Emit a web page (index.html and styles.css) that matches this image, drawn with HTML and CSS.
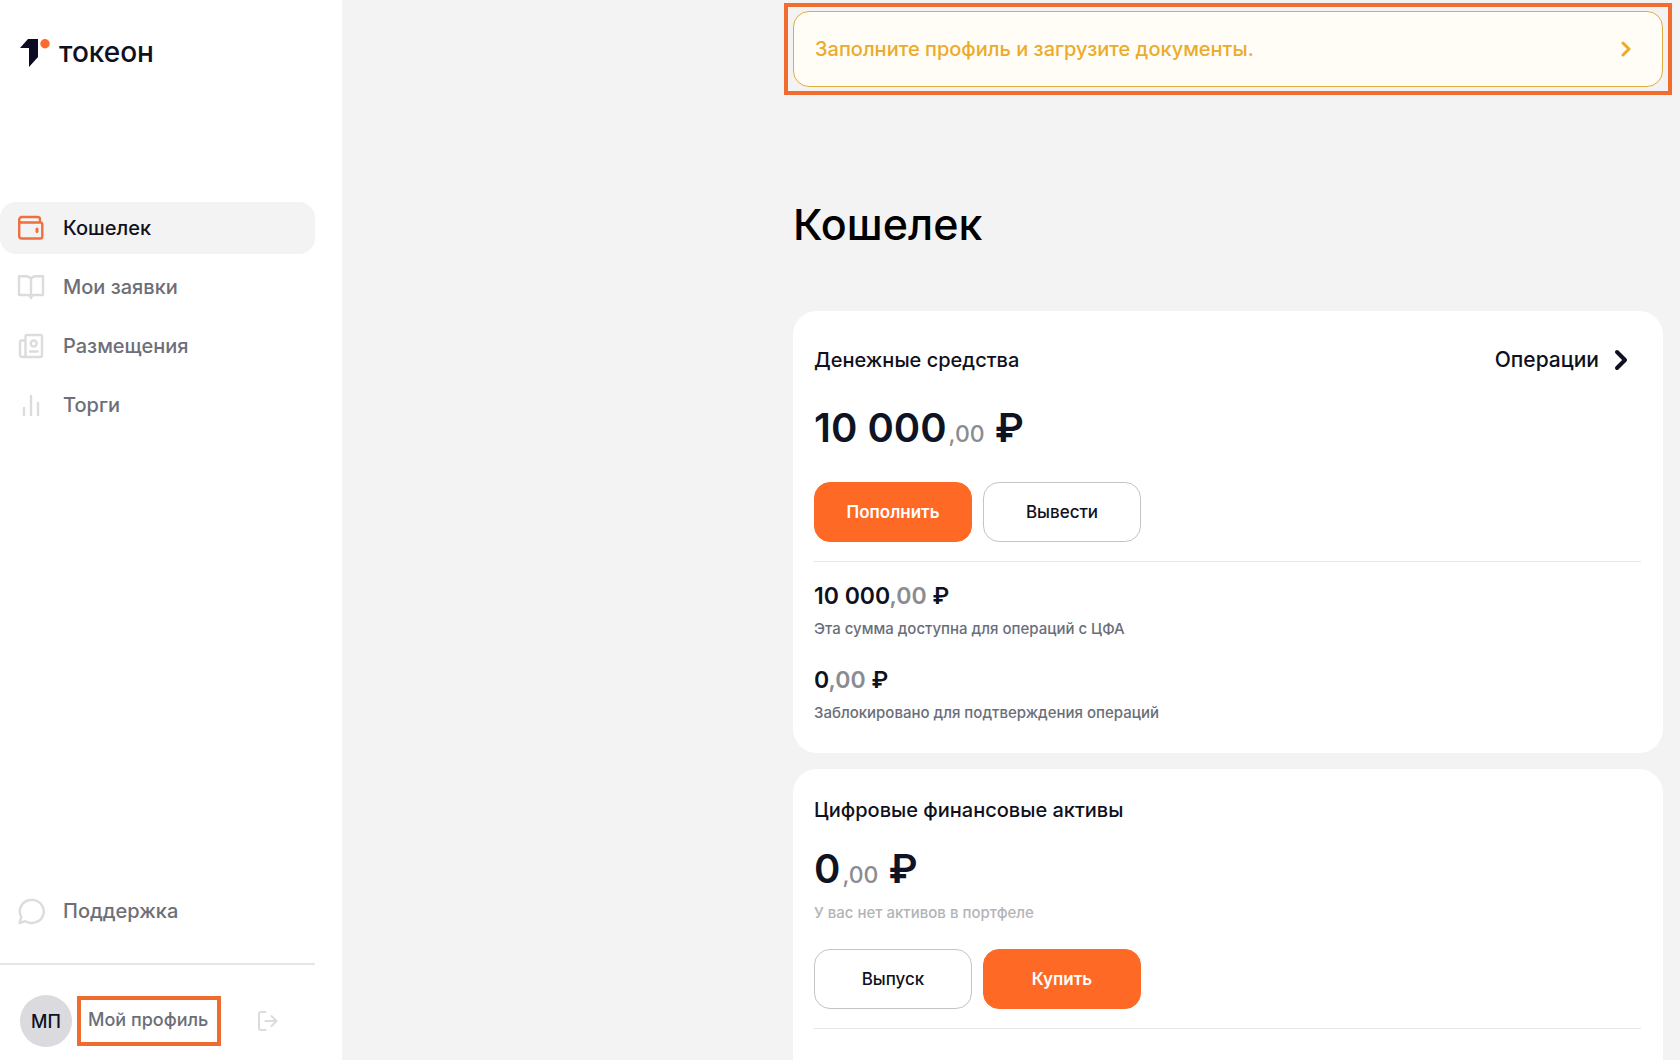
FILE: index.html
```
<!DOCTYPE html>
<html lang="ru">
<head>
  <meta charset="UTF-8" />
  <meta name="viewport" content="width=device-width, initial-scale=1.0" />
  <title>Токеон</title>
  <link rel="stylesheet" href="styles.css">
</head>
<body>
  <div class="app">
    <aside class="sidebar">
      <a class="logo" href="#">
        <svg width="30" height="28" viewBox="0 0 30 28">
          <path d="M0 9 L8 0 H18 V18 L9 28 V9 Z" fill="#0d0a24" />
          <circle cx="25" cy="4.7" r="4.7" fill="#fd6a2c" />
        </svg>
        <span>токеон</span>
      </a>

      <nav class="menu">
        <a class="menu-item active" href="#">
          <svg class="icon" viewBox="0 0 28 28">
            <path d="M2.2 6.5 V22 A2.5 2.5 0 0 0 4.7 24.5 H23.3 A2 2 0 0 0 25.3 22.5 V10.5 A2 2 0 0 0 23.3 8.5 H4.5 A2.3 2.3 0 0 1 2.2 6.2 A2.8 2.8 0 0 1 5 3 H20.5 A2.5 2.5 0 0 1 23 5.5 V8.5" />
            <path d="M20 15 V17.5" stroke-width="3" />
          </svg>
          <span>Кошелек</span>
        </a>
        <a class="menu-item" href="#">
          <svg class="icon" viewBox="0 0 28 28">
            <path d="M14 6 C13 4 11.5 3.2 9 3.2 H2 V22 H10.5 C12.5 22 14 23 14 25 C14 23 15.5 22 17.5 22 H26 V3.2 H19 C16.5 3.2 15 4 14 6 V24.5" />
          </svg>
          <span>Мои заявки</span>
        </a>
        <a class="menu-item" href="#">
          <svg class="icon" viewBox="0 0 28 28">
            <path d="M8.5 22.5 V4.5 A1.5 1.5 0 0 1 10 3 H23.5 A1.5 1.5 0 0 1 25 4.5 V23 A2 2 0 0 1 23 25 H5.5 A2.5 2.5 0 0 1 3 22.5 V10 A1.5 1.5 0 0 1 4.5 8.5 H8.5 M8.5 22 A2.8 2.8 0 0 1 6 25" />
            <circle cx="16.7" cy="11.5" r="3" />
            <path d="M13 19.5 H20.5" />
          </svg>
          <span>Размещения</span>
        </a>
        <a class="menu-item" href="#">
          <svg class="icon" viewBox="0 0 28 28">
            <path d="M7 17 V24 M14 5 V24 M21 12 V24" />
          </svg>
          <span>Торги</span>
        </a>
      </nav>

      <div class="sidebar-bottom">
        <a class="menu-item" href="#">
          <svg class="icon" viewBox="0 0 28 28">
            <path d="M2.5 26 L4.3 20 A12 11.5 0 1 1 8.5 24.2 Z" />
          </svg>
          <span>Поддержка</span>
        </a>
        <div class="profile">
          <div class="avatar">МП</div>
          <a class="profile-link" href="#">Мой профиль</a>
          <button class="logout" type="button" aria-label="Выйти">
            <svg width="20" height="22" viewBox="0 0 20 22">
              <path d="M7.5 2 H3 A2 2 0 0 0 1 4 V18 A2 2 0 0 0 3 20 H7.5 M7.5 11 H18.5 M13.5 6 L18.5 11 L13.5 16" />
            </svg>
          </button>
        </div>
      </div>
    </aside>

    <main class="main">
      <div class="content">
        <div class="notice-frame">
          <a class="notice" href="#">
            <span>Заполните профиль и загрузите документы.</span>
            <svg width="10" height="16" viewBox="0 0 10 16"><path d="M2 2 L8 8 L2 14" /></svg>
          </a>
        </div>

        <div class="wallet">
          <h1>Кошелек</h1>

          <section class="card">
            <div class="card-head">
              <h2>Денежные средства</h2>
              <a class="operations" href="#">
                <span>Операции</span>
                <svg width="14" height="22" viewBox="0 0 14 22"><path d="M3 3 L11 11 L3 19" /></svg>
              </a>
            </div>
            <div class="amount">10 000<small>,00</small> ₽</div>
            <div class="buttons">
              <button class="btn btn-primary" type="button">Пополнить</button>
              <button class="btn" type="button">Вывести</button>
            </div>
            <div class="details">
              <div class="sum">10 000<span>,00</span> ₽</div>
              <p>Эта сумма доступна для операций с ЦФА</p>
              <div class="sum">0<span>,00</span> ₽</div>
              <p>Заблокировано для подтверждения операций</p>
            </div>
          </section>

          <section class="card card-assets">
            <div class="card-head">
              <h2>Цифровые финансовые активы</h2>
            </div>
            <div class="amount">0<small>,00</small> ₽</div>
            <p class="empty">У вас нет активов в портфеле</p>
            <div class="buttons">
              <button class="btn" type="button">Выпуск</button>
              <button class="btn btn-primary" type="button">Купить</button>
            </div>
            <div class="details"></div>
          </section>
        </div>
      </div>
    </main>
  </div>
</body>
</html>
```
FILE: styles.css
```
* {
  box-sizing: border-box;
}

body {
  margin: 0;
  background: #f3f3f3;
  color: #0f1120;
  font-family: Inter, "Noto Sans", sans-serif;
  font-size: 20px;
  font-weight: 500;
}

a {
  color: inherit;
  text-decoration: none;
}

h1, h2, p {
  margin: 0;
  font-weight: 500;
}

button {
  font: inherit;
  cursor: pointer;
}

svg {
  flex: none;
  fill: none;
  stroke-linecap: round;
  stroke-linejoin: round;
}

.app {
  display: flex;
  height: 100vh;
}

/* sidebar */
.sidebar {
  display: flex;
  flex-direction: column;
  flex: none;
  width: 342px;
  padding: 32px 27px 13px 0;
  background: #fff;
}

.logo {
  display: flex;
  align-items: center;
  gap: 9px;
  height: 42px;
  padding-left: 20px;
  font-size: 28px;
  line-height: 38px;
}

.logo span {
  padding-bottom: 2px;
}

.menu {
  display: flex;
  flex-direction: column;
  gap: 7px;
  margin-top: 128px;
}

.menu-item {
  display: flex;
  align-items: center;
  gap: 18px;
  height: 52px;
  padding-left: 17px;
  border-radius: 16px;
  color: #6d6e78;
}

.menu-item.active {
  background: #f3f3f3;
  color: #0f1120;
}

.icon {
  width: 28px;
  height: 28px;
  stroke: #dcdcde;
  stroke-width: 2.4;
}

.active .icon {
  stroke: #ee7040;
}

.sidebar-bottom {
  margin-top: auto;
}

.profile {
  display: flex;
  align-items: center;
  margin-top: 26px;
  padding: 30px 0 0 20px;
  border-top: 2px solid #e6e6e8;
  font-size: 18px;
}

.avatar {
  display: flex;
  align-items: center;
  justify-content: center;
  width: 52px;
  height: 52px;
  border-radius: 50%;
  background: #dadadf;
}

.profile-link {
  margin-left: 5px;
  padding: 9px 9px 11px 7px;
  border: 4px solid #ef6c30;
  color: #6d6e78;
  line-height: 22px;
}

.logout {
  display: flex;
  margin-left: auto;
  margin-right: 37px;
  padding: 0;
  border: 0;
  background: none;
}

.logout svg {
  stroke: #dcdcde;
  stroke-width: 2;
}

/* content */
.main {
  flex: 1;
  padding: 3px 8px 0;
  overflow-y: auto;
  scrollbar-width: none;
}

.content {
  max-width: 888px;
  margin-left: auto;
}

.notice-frame {
  padding: 4px 5px;
  border: 4px solid #f26b2f;
}

.notice {
  display: flex;
  align-items: center;
  justify-content: space-between;
  height: 76px;
  padding: 0 31px 0 21px;
  border: 1px solid #e0ad40;
  border-radius: 16px;
  background: #fffdf5;
  color: #ecab2b;
}

.notice svg {
  stroke: #ecab2b;
  stroke-width: 3;
}

.wallet {
  padding: 0 9px;
}

h1 {
  margin: 99px 0 57px;
  color: #000;
  font-size: 43px;
  line-height: 60px;
}

.card {
  padding: 34px 22px 28px 21px;
  border-radius: 24px;
  background: #fff;
}

.card-assets {
  height: 442px;
  margin-top: 16px;
  padding-top: 26px;
}

.card-head {
  display: flex;
  align-items: center;
  justify-content: space-between;
}

h2 {
  font-size: 20px;
  line-height: 30px;
}

.operations {
  display: flex;
  align-items: center;
  gap: 15px;
  padding-right: 13px;
  font-size: 21px;
  line-height: 30px;
}

.operations svg {
  stroke: #0f1120;
  stroke-width: 4;
}

.amount {
  margin-top: 28px;
  color: #0f1424;
  font-size: 40px;
  font-weight: 600;
  line-height: 50px;
}

.amount small {
  margin-left: 2px;
  color: #8b8c92;
  font-size: 23px;
  font-weight: 500;
}

.buttons {
  display: flex;
  gap: 11px;
  margin-top: 23px;
}

.btn {
  width: 158px;
  height: 60px;
  border: 1px solid #c4c4c6;
  border-radius: 16px;
  background: #fff;
  color: #0f1120;
  font-size: 17px;
}

.btn-primary {
  border-color: #ff6926;
  background: #ff6926;
  color: #fff;
  font-weight: 600;
}

.details {
  margin-top: 19px;
  padding-top: 18px;
  border-top: 1px solid #e6e6e8;
}

.sum {
  font-size: 23px;
  font-weight: 600;
  line-height: 32px;
}

.sum span {
  color: #8b8c92;
}

.details p {
  margin-top: 5px;
  color: #696e79;
  font-size: 15px;
  line-height: 24px;
}

.details p + .sum {
  margin-top: 23px;
}

.card-assets .amount {
  margin-top: 19px;
}

.empty {
  margin-top: 1px;
  color: #b3b4b8;
  font-size: 15px;
  line-height: 24px;
}

.empty + .buttons {
  margin-top: 24px;
}
```
